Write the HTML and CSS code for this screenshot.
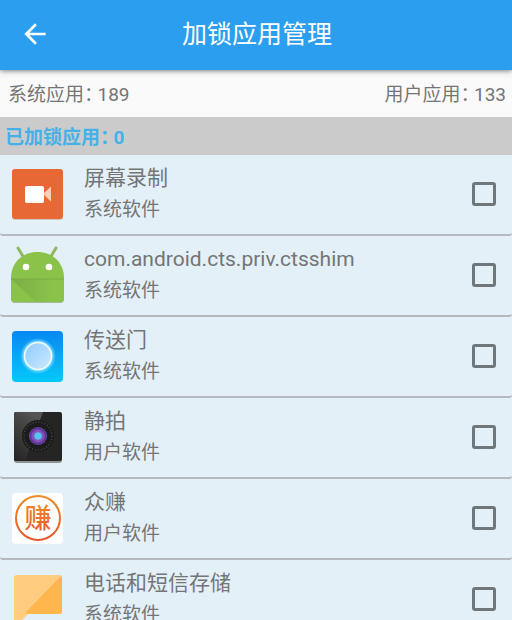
FILE: index.html
```html
<!DOCTYPE html>
<html lang="zh-CN">
<head>
    <meta charset="UTF-8">
    <meta name="viewport" content="width=device-width, initial-scale=1.0">
    <title>加锁应用管理</title>
    <link rel="stylesheet" href="styles.css">
</head>
<body>
    <header class="toolbar">
        <button class="back-button" type="button" aria-label="返回">
            <svg width="32" height="32" viewBox="0 0 24 24" fill="#fff"><path d="M20 11H7.800l5.600-5.600L12 4l-8 8 8 8 1.400-1.400L7.800 13H20z"/></svg>
        </button>
        <h1>加锁应用管理</h1>
    </header>
    <div class="summary">
        <span class="count">系统应用：<span>189</span></span>
        <span class="count">用户应用：<span>133</span></span>
    </div>
    <main>
        <h2 class="locked count">已加锁应用：<span>0</span></h2>
        <ul class="app-list">
            <li>
                <label class="app">
                    <svg class="app-icon" viewBox="0 0 54 58">
                        <rect x="2" y="5" width="51" height="50" rx="3" fill="#cfc6c0"/>
                        <rect x="2" y="4" width="51" height="50" rx="3" fill="#e86835"/>
                        <path d="M33 29l8-7.500v15z" fill="#f9cdbb"/>
                        <rect x="15" y="21" width="19" height="17" rx="2" fill="#fff"/>
                    </svg>
                    <span class="app-text">
                        <span class="app-name">屏幕录制</span>
                        <span class="app-type">系统软件</span>
                    </span>
                    <input type="checkbox">
                </label>
            </li>
            <li>
                <label class="app">
                    <svg class="app-icon" viewBox="0 0 54 58">
                        <defs>
                            <linearGradient id="fold" x1="0" y1="0" x2="1" y2="0">
                                <stop offset="0" stop-color="#7cae45"/>
                                <stop offset="0.800" stop-color="#8bc34a"/>
                            </linearGradient>
                        </defs>
                        <path d="M8 2l6 10M46 2l-6 10" stroke="#8fb964" stroke-width="3" stroke-linecap="round"/>
                        <path d="M1 33h53v20q0 4-4 4H5q-4 0-4-4z" fill="#a5b99b"/>
                        <path d="M1 32C1 16 13 6 27.500 6S54 16 54 32z" fill="#8bc34a"/>
                        <path d="M1 32h53v20q0 4-4 4H5q-4 0-4-4z" fill="#8bc34a"/>
                        <path d="M1 33h53v19q0 4-4 4H26z" fill="url(#fold)"/>
                        <path d="M1 33h53" stroke="#7cab43"/>
                        <circle cx="16" cy="21" r="3.300" fill="#fff"/>
                        <circle cx="39" cy="21" r="3.300" fill="#fff"/>
                    </svg>
                    <span class="app-text">
                        <span class="app-name">com.android.cts.priv.ctsshim</span>
                        <span class="app-type">系统软件</span>
                    </span>
                    <input type="checkbox">
                </label>
            </li>
            <li>
                <label class="app">
                    <svg class="app-icon" viewBox="0 0 54 58">
                        <defs>
                            <linearGradient id="sky" x1="0" y1="0" x2="0" y2="1">
                                <stop offset="0" stop-color="#0788f3"/>
                                <stop offset="1" stop-color="#05c8fa"/>
                            </linearGradient>
                            <linearGradient id="portal" x1="0" y1="0" x2="1" y2="1">
                                <stop offset="0" stop-color="#8fcbff"/>
                                <stop offset="1" stop-color="#cdeaff"/>
                            </linearGradient>
                            <radialGradient id="glow">
                                <stop offset="0.750" stop-color="#b9f0ff" stop-opacity="0.900"/>
                                <stop offset="1" stop-color="#6fdcff" stop-opacity="0"/>
                            </radialGradient>
                        </defs>
                        <rect x="2" y="4" width="51" height="51" rx="4" fill="url(#sky)"/>
                        <circle cx="28" cy="29" r="18" fill="url(#glow)"/>
                        <circle cx="28" cy="29" r="13.500" fill="url(#portal)" stroke="#f0fcff" stroke-width="1.500"/>
                    </svg>
                    <span class="app-text">
                        <span class="app-name">传送门</span>
                        <span class="app-type">系统软件</span>
                    </span>
                    <input type="checkbox">
                </label>
            </li>
            <li>
                <label class="app">
                    <svg class="app-icon" viewBox="0 0 54 58">
                        <defs>
                            <linearGradient id="shine" x1="0" y1="1" x2="0.600" y2="0">
                                <stop offset="0" stop-color="#222"/>
                                <stop offset="1" stop-color="#555"/>
                            </linearGradient>
                            <radialGradient id="lens">
                                <stop offset="0.300" stop-color="#8aa0e0"/>
                                <stop offset="0.600" stop-color="#6a45b0"/>
                                <stop offset="0.850" stop-color="#6f2791"/>
                                <stop offset="1" stop-color="#4a62b8"/>
                            </radialGradient>
                        </defs>
                        <rect x="4" y="6" width="48" height="49" rx="3" fill="#8e9294"/>
                        <rect x="4" y="4" width="48" height="49" rx="2" fill="#252525"/>
                        <path d="M6 4h27L15 53H6q-2 0-2-2V6q0-2 2-2z" fill="url(#shine)"/>
                        <circle cx="28" cy="28" r="16" fill="#1c1c1e"/>
                        <circle cx="28" cy="28" r="14" fill="none" stroke="#4b4b4b" stroke-width="1.500" stroke-dasharray="1 2"/>
                        <circle cx="28" cy="28" r="9" fill="url(#lens)"/>
                        <circle cx="28" cy="28" r="6" fill="none" stroke="#8c5bc0"/>
                        <circle cx="28" cy="28" r="3.300" fill="#55c5f2"/>
                    </svg>
                    <span class="app-text">
                        <span class="app-name">静拍</span>
                        <span class="app-type">用户软件</span>
                    </span>
                    <input type="checkbox">
                </label>
            </li>
            <li>
                <label class="app">
                    <svg class="app-icon" viewBox="0 0 54 58">
                        <defs>
                            <linearGradient id="orange" x1="0" y1="0" x2="0" y2="1">
                                <stop offset="0" stop-color="#ef8a24"/>
                                <stop offset="1" stop-color="#e4572d"/>
                            </linearGradient>
                        </defs>
                        <rect x="2" y="4" width="51" height="51" rx="4" fill="#fff"/>
                        <circle cx="28" cy="29" r="22" fill="none" stroke="url(#orange)" stroke-width="2"/>
                        <text class="icon-char" x="28" y="39" fill="url(#orange)">赚</text>
                    </svg>
                    <span class="app-text">
                        <span class="app-name">众赚</span>
                        <span class="app-type">用户软件</span>
                    </span>
                    <input type="checkbox">
                </label>
            </li>
            <li>
                <label class="app">
                    <svg class="app-icon" viewBox="0 0 54 58">
                        <path d="M7 5h42q3 0 3 3v33q0 3-3 3H18L4 58V8q0-3 3-3z" fill="#ffcc80"/>
                        <path d="M51 6q1 1 1 2v33q0 3-3 3H18l-3-1z" fill="#ffb74d"/>
                    </svg>
                    <span class="app-text">
                        <span class="app-name">电话和短信存储</span>
                        <span class="app-type">系统软件</span>
                    </span>
                    <input type="checkbox">
                </label>
            </li>
        </ul>
    </main>
</body>
</html>
```

FILE: styles.css
```css
* {
    box-sizing: border-box;
}

body {
    display: flex;
    flex-direction: column;
    height: 100vh;
    margin: 0;
    font-family: Roboto, "Noto Sans CJK SC", sans-serif;
    font-size: 19px;
    line-height: 28px;
    color: #757575;
    background-color: #fafafa;
}

.toolbar {
    display: grid;
    grid-template-columns: 64px 1fr 62px;
    align-items: center;
    flex: none;
    height: 70px;
    color: #fff;
    background-color: #2b9ef0;
    box-shadow: 0 1px 5px rgba(0, 0, 0, 0.5);
}

.toolbar h1 {
    margin: 0;
    font-size: 25px;
    font-weight: 400;
    text-align: center;
}

.back-button {
    display: flex;
    justify-content: flex-end;
    padding: 0 13px 2px;
    border: none;
    background: none;
    cursor: pointer;
}

.summary {
    display: flex;
    justify-content: space-between;
    align-items: center;
    flex: none;
    height: 47px;
    padding: 3px 6px 0 8px;
}

/* half-width colon before the number */
.count {
    font-feature-settings: "halt";
}

.count span {
    margin-left: 4px;
}

main {
    flex: 1;
    min-height: 0;
    overflow-y: auto;
    scrollbar-width: none;
    background-color: #e3f0f8;
}

.locked {
    margin: 0;
    padding: 7px 5px 3px;
    font-size: 19px;
    font-weight: 700;
    color: #45b1e8;
    background-color: #cbcbcb;
}

.app-list {
    margin: 0;
    padding: 0;
    list-style: none;
}

.app {
    display: flex;
    align-items: center;
    height: 81px;
    padding: 0 16px 2px 10px;
    border-bottom: 2px solid #b3b9bd;
    border-radius: 3px;
}

.app-icon {
    flex: none;
    width: 54px;
    height: 58px;
}

.app-text {
    display: flex;
    flex-direction: column;
    flex: 1;
    gap: 4px;
    margin-left: 20px;
}

.app-name {
    font-size: 21px;
}

.icon-char {
    font-size: 27px;
    font-weight: 500;
    text-anchor: middle;
}

.app input {
    appearance: none;
    width: 24px;
    height: 24px;
    margin: 0;
    border: 3px solid #70777b;
    border-radius: 3px;
}

.app input:checked {
    background-color: #2b9ef0;
}
```
